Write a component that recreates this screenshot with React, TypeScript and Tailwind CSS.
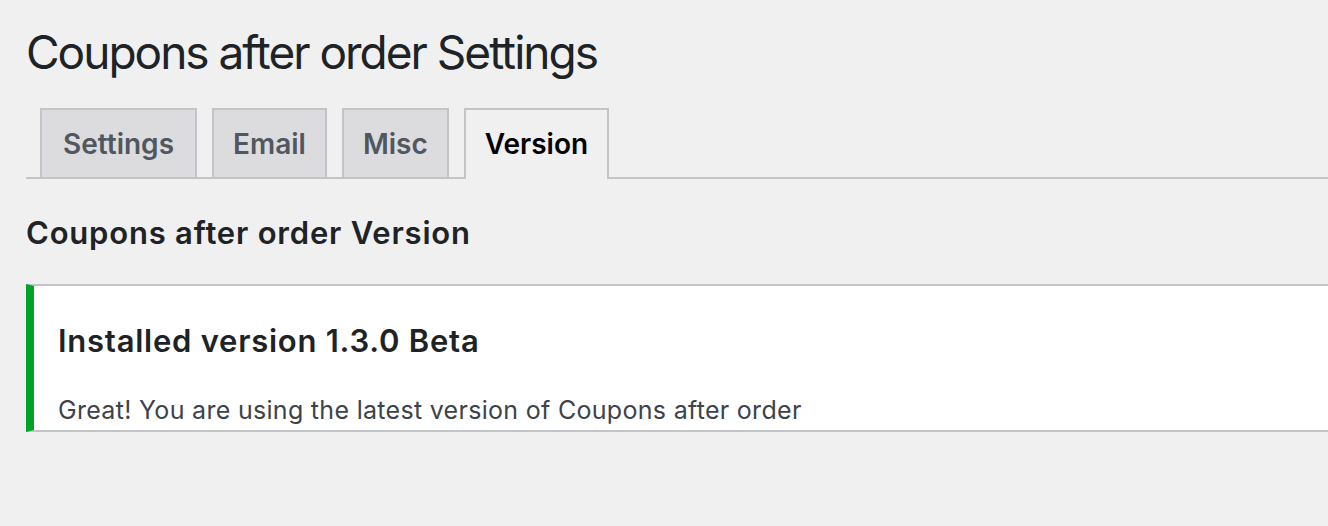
import React from "react";

const tabs = ["Settings", "Email", "Misc", "Version"];

export default function App() {
  return (
    <div className="min-h-screen w-full overflow-hidden bg-[#f0f0f1] pl-[26px] font-['Inter','Noto_Sans',sans-serif] text-[#1d2327]">
      <h1 className="pt-[22px] text-[46px] font-normal leading-[60px] tracking-[-2px] text-[#1d2327]">
        Coupons after order Settings
      </h1>
      <nav className="mt-[26px] flex items-end gap-[15px] border-b-2 border-[#c3c4c7] pl-[14px]">
        {tabs.map((t) => {
          const active = t === "Version";
          return (
            <a
              key={t}
              className={
                active
                  ? "-mb-[2px] border-2 border-b-0 border-[#c3c4c7] bg-[#f0f0f1] px-[19px] pb-[11px] pt-[10px] text-[28px] font-semibold leading-[48px] text-black"
                  : t === "Settings"
                  ? "border-2 border-b-0 border-[#c3c4c7] bg-[#dcdcde] px-[21px] pb-[9px] pt-[10px] text-[28px] font-semibold leading-[48px] text-[#50575e]"
                  : "border-2 border-b-0 border-[#c3c4c7] bg-[#dcdcde] px-[19px] pb-[9px] pt-[10px] text-[28px] font-semibold leading-[48px] text-[#50575e]"
              }
            >
              {t}
            </a>
          );
        })}
      </nav>
      <h2 className="mt-[34px] text-[31px] font-semibold leading-[40px] tracking-[0.8px] text-[#1d2327]">
        Coupons after order Version
      </h2>
      <div className="mt-[31px] border-y-2 border-l-[8px] border-[#c3c4c7] border-l-[#00a32a] bg-white pb-[2px] pl-[24px]">
        <h3 className="pt-[35px] text-[31px] font-semibold leading-[40px] tracking-[0.75px] text-[#1d2327]">
          Installed version 1.3.0 Beta
        </h3>
        <p className="mt-[31px] text-[25px] leading-[36px] tracking-[0.3px] text-[#3c434a]">
          Great! You are using the latest version of Coupons after order
        </p>
      </div>
    </div>
  );
}
